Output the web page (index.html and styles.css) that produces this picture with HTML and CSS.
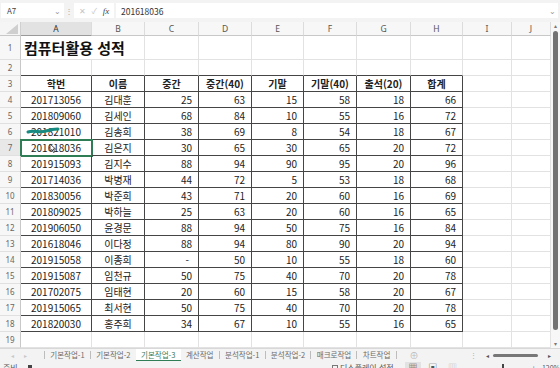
FILE: index.html
```html
<!DOCTYPE html>
<html lang="ko">
<head>
<meta charset="utf-8">
<link rel="stylesheet" href="styles.css">
</head>
<body>
<div class="fbar">
  <div class="namebox"><span>A7</span><span class="chev">⌄</span></div>
  <div class="fsep">⋮</div>
  <div class="fxbox"><span class="fxi">✕</span><span class="fxi">✓</span><span class="fx">fx</span></div>
  <div class="finput"><span>201618036</span><span class="chev">⌄</span></div>
</div>
<div class="main">
  <div class="grid">
    <div class="corner"><svg width="20" height="13" viewBox="0 0 20 13"><polygon points="18,2 18,12 6,12" fill="#cfcfcf"/></svg></div>
    <div class="ch sel">A</div><div class="ch">B</div><div class="ch">C</div><div class="ch">D</div><div class="ch">E</div><div class="ch">F</div><div class="ch">G</div><div class="ch">H</div><div class="ch">I</div><div class="ch">J</div>

    <div class="rh">1</div><div class="c title">컴퓨터활용 성적</div><div class="c"></div><div class="c"></div><div class="c"></div><div class="c"></div><div class="c"></div><div class="c"></div><div class="c"></div><div class="c"></div>

    <div class="rh">2</div><div class="c tt"></div><div class="c tt"></div><div class="c tt"></div><div class="c tt"></div><div class="c tt"></div><div class="c tt"></div><div class="c tt"></div><div class="c tt"></div><div class="c"></div><div class="c"></div>

    <div class="rh">3</div><div class="c t th">학번</div><div class="c t th">이름</div><div class="c t th">중간</div><div class="c t th">중간(40)</div><div class="c t th">기말</div><div class="c t th">기말(40)</div><div class="c t th">출석(20)</div><div class="c t th">합계</div><div class="c"></div><div class="c"></div>

    <div class="rh">4</div><div class="c t ctr">201713056</div><div class="c t ctr">김대훈</div><div class="c t num">25</div><div class="c t num">63</div><div class="c t num">15</div><div class="c t num">58</div><div class="c t num">18</div><div class="c t num">66</div><div class="c"></div><div class="c"></div>

    <div class="rh">5</div><div class="c t ctr">201809060</div><div class="c t ctr">김세인</div><div class="c t num">68</div><div class="c t num">84</div><div class="c t num">10</div><div class="c t num">55</div><div class="c t num">16</div><div class="c t num">72</div><div class="c"></div><div class="c"></div>

    <div class="rh">6</div><div class="c t ctr">201821010</div><div class="c t ctr">김송희</div><div class="c t num">38</div><div class="c t num">69</div><div class="c t num">8</div><div class="c t num">54</div><div class="c t num">18</div><div class="c t num">67</div><div class="c"></div><div class="c"></div>

    <div class="rh rsel">7</div><div class="c t ctr active">201618036</div><div class="c t ctr">김은지</div><div class="c t num">30</div><div class="c t num">65</div><div class="c t num">30</div><div class="c t num">65</div><div class="c t num">20</div><div class="c t num">72</div><div class="c"></div><div class="c"></div>

    <div class="rh">8</div><div class="c t ctr">201915093</div><div class="c t ctr">김지수</div><div class="c t num">88</div><div class="c t num">94</div><div class="c t num">90</div><div class="c t num">95</div><div class="c t num">20</div><div class="c t num">96</div><div class="c"></div><div class="c"></div>

    <div class="rh">9</div><div class="c t ctr">201714036</div><div class="c t ctr">박병재</div><div class="c t num">44</div><div class="c t num">72</div><div class="c t num">5</div><div class="c t num">53</div><div class="c t num">18</div><div class="c t num">68</div><div class="c"></div><div class="c"></div>

    <div class="rh">10</div><div class="c t ctr">201830056</div><div class="c t ctr">박준희</div><div class="c t num">43</div><div class="c t num">71</div><div class="c t num">20</div><div class="c t num">60</div><div class="c t num">16</div><div class="c t num">69</div><div class="c"></div><div class="c"></div>

    <div class="rh">11</div><div class="c t ctr">201809025</div><div class="c t ctr">박하늘</div><div class="c t num">25</div><div class="c t num">63</div><div class="c t num">20</div><div class="c t num">60</div><div class="c t num">16</div><div class="c t num">65</div><div class="c"></div><div class="c"></div>

    <div class="rh">12</div><div class="c t ctr">201906050</div><div class="c t ctr">윤경문</div><div class="c t num">88</div><div class="c t num">94</div><div class="c t num">50</div><div class="c t num">75</div><div class="c t num">16</div><div class="c t num">84</div><div class="c"></div><div class="c"></div>

    <div class="rh">13</div><div class="c t ctr">201618046</div><div class="c t ctr">이다정</div><div class="c t num">88</div><div class="c t num">94</div><div class="c t num">80</div><div class="c t num">90</div><div class="c t num">20</div><div class="c t num">94</div><div class="c"></div><div class="c"></div>

    <div class="rh">14</div><div class="c t ctr">201915058</div><div class="c t ctr">이종희</div><div class="c t num dash">-</div><div class="c t num">50</div><div class="c t num">10</div><div class="c t num">55</div><div class="c t num">18</div><div class="c t num">60</div><div class="c"></div><div class="c"></div>

    <div class="rh">15</div><div class="c t ctr">201915087</div><div class="c t ctr">임천규</div><div class="c t num">50</div><div class="c t num">75</div><div class="c t num">40</div><div class="c t num">70</div><div class="c t num">20</div><div class="c t num">78</div><div class="c"></div><div class="c"></div>

    <div class="rh">16</div><div class="c t ctr">201702075</div><div class="c t ctr">임태현</div><div class="c t num">20</div><div class="c t num">60</div><div class="c t num">15</div><div class="c t num">58</div><div class="c t num">20</div><div class="c t num">67</div><div class="c"></div><div class="c"></div>

    <div class="rh">17</div><div class="c t ctr">201915065</div><div class="c t ctr">최서현</div><div class="c t num">50</div><div class="c t num">75</div><div class="c t num">40</div><div class="c t num">70</div><div class="c t num">20</div><div class="c t num">78</div><div class="c"></div><div class="c"></div>

    <div class="rh">18</div><div class="c t ctr">201820030</div><div class="c t ctr">홍주희</div><div class="c t num">34</div><div class="c t num">67</div><div class="c t num">10</div><div class="c t num">55</div><div class="c t num">16</div><div class="c t num">65</div><div class="c"></div><div class="c"></div>

    <div class="rh">19</div><div class="c"></div><div class="c"></div><div class="c"></div><div class="c"></div><div class="c"></div><div class="c"></div><div class="c"></div><div class="c"></div><div class="c"></div><div class="c"></div>

    <svg class="pen" width="34" height="10" viewBox="0 0 34 10"><path d="M2 7 C 8 5, 14 8, 20 6 S 28 4, 32 4" stroke="#178a82" stroke-width="3" fill="none" stroke-linecap="round"/></svg>
    <svg class="cursor" width="7" height="10" viewBox="0 0 7 10"><path d="M1 1 L1 8 L3 6.5 L4.5 9.5 L5.8 8.8 L4.3 6 L6.5 6 Z" fill="#fff" stroke="#222" stroke-width="0.8"/></svg>
  </div>
  <div class="vscroll">
    <span class="va">▴</span>
    <div class="vthumb"></div>
    <span class="va">▾</span>
  </div>
</div>
<div class="tabs">
  <div class="navs"><span class="nav">◂</span><span class="nav">▸</span></div>
  <span class="tsep"></span>
  <span class="tab">기본작업-1</span><span class="tsep"></span>
  <span class="tab">기본작업-2</span>
  <span class="tab on">기본작업-3</span>
  <span class="tab">계산작업</span><span class="tsep"></span>
  <span class="tab">분석작업-1</span><span class="tsep"></span>
  <span class="tab">분석작업-2</span><span class="tsep"></span>
  <span class="tab">매크로작업</span><span class="tsep"></span>
  <span class="tab">차트작업</span><span class="tsep"></span>
  <span class="plus">⊕</span>
  <span class="hs">
    <span class="dots">⋮</span><span class="ha">◂</span><span class="hthumb"></span><span class="ha">▸</span>
  </span>
</div>
<div class="status">
  <span class="ready">준비</span><span class="sicon"></span>
  <span class="disp"><span class="box"></span>디스플레이 설정</span>
  <span class="view on">▦</span><span class="view">▣</span><span class="view light">▥</span>
  <span class="zm">−</span><span class="slider"><span class="knob"></span></span><span class="zm">+</span><span class="pct">120%</span>
</div>
</body>
</html>
```
FILE: styles.css
```css
html, body {
  margin: 0;
  padding: 0;
}
body {
  width: 560px;
  height: 368px;
  overflow: hidden;
  background: #f3f3f3;
  font-family: "Noto Sans CJK KR", "Noto Sans", sans-serif;
  color: #222;
}

/* formula bar */
.fbar {
  height: 22px;
  box-sizing: border-box;
  padding: 3px 2px 0 1px;
  display: flex;
  align-items: flex-start;
}
.namebox {
  width: 63px;
  height: 15px;
  background: #fff;
  box-sizing: border-box;
  display: flex;
  align-items: center;
  justify-content: space-between;
  padding: 0 3px 0 6px;
  font-size: 8px;
  color: #444;
}
.chev {
  font-size: 8px;
  color: #999;
  line-height: 8px;
}
.fsep {
  width: 10px;
  text-align: center;
  font-size: 8px;
  color: #aaa;
  line-height: 15px;
}
.fxbox {
  width: 40px;
  height: 15px;
  background: #fff;
  display: flex;
  align-items: center;
  justify-content: space-around;
  padding: 0 2px;
  box-sizing: border-box;
}
.fxi {
  font-size: 8px;
  color: #c4c4c4;
}
.fx {
  font-family: "Liberation Serif", serif;
  font-style: italic;
  font-size: 9px;
  color: #444;
}
.finput {
  flex: 1;
  height: 15px;
  margin-left: 2px;
  background: #fff;
  display: flex;
  align-items: center;
  justify-content: space-between;
  padding: 0 2px 0 5px;
  font-size: 8.5px;
  color: #333;
}

/* sheet */
.main {
  display: flex;
}
.grid {
  position: relative;
  display: grid;
  grid-template-columns: 21px 71px 53px 54px 53px 52px 53px 54px 52px 49px 39px;
  grid-template-rows: 14px 24px repeat(18, 16px);
  background: #fff;
}
.corner {
  background: #f5f5f5;
  border-right: 1px solid #d0d0d0;
  border-bottom: 1px solid #c8c8c8;
  box-sizing: border-box;
}
.corner svg {
  display: block;
}
.ch {
  background: #f7f7f7;
  border-right: 1px solid #dcdcdc;
  border-bottom: 1px solid #c8c8c8;
  box-sizing: border-box;
  font-family: "Noto Sans", sans-serif;
  font-size: 8.5px;
  line-height: 13px;
  color: #555;
  text-align: center;
}
.ch.sel {
  background: #e2e2e2;
  border-bottom: 1px solid #9a9a9a;
  color: #333;
}
.rh {
  background: #f7f7f7;
  border-right: 1px solid #c8c8c8;
  border-bottom: 1px solid #e0e0e0;
  box-sizing: border-box;
  font-family: "Noto Sans", sans-serif;
  font-size: 8px;
  color: #666;
  display: flex;
  align-items: center;
  justify-content: center;
}
.rh.rsel {
  background: #e8e8e8;
}
.c {
  border-right: 1px solid #e2e2e2;
  border-bottom: 1px solid #e2e2e2;
  box-sizing: border-box;
  font-size: 10px;
  line-height: 15px;
  padding: 0 6px 0 3px;
  white-space: nowrap;
  overflow: hidden;
  color: #222;
}
.title {
  grid-column: span 2;
  font-size: 15px;
  font-weight: 700;
  line-height: 23px;
  padding-left: 3px;
  color: #111;
}
.tt {
  border-bottom-color: #454545;
}
.t {
  border-right-color: #454545;
  border-bottom-color: #454545;
}
.th {
  font-weight: 700;
  text-align: center;
  padding: 0;
}
.ctr {
  text-align: center;
  padding: 0;
}
.num {
  text-align: right;
}
.num.dash {
  padding-right: 9px;
}
.active {
  outline: 2px solid #2e7d55;
  outline-offset: -1px;
}
.pen {
  position: absolute;
  left: 26px;
  top: 103px;
}
.cursor {
  position: absolute;
  left: 49px;
  top: 121px;
}

/* vertical scrollbar */
.vscroll {
  width: 9px;
  height: 326px;
  background: #f7f7f7;
  display: flex;
  flex-direction: column;
  align-items: center;
}
.va {
  font-size: 6px;
  line-height: 8px;
  color: #777;
}
.vthumb {
  width: 5px;
  flex: 1;
  margin: 1px 0 10px;
  border-radius: 3px;
  background: #737373;
}

/* sheet tabs */
.tabs {
  height: 13px;
  box-sizing: border-box;
  border-top: 1px solid #d8d8d8;
  display: flex;
  align-items: center;
  font-size: 7.5px;
  color: #6a6a6a;
  white-space: nowrap;
}
.navs {
  width: 44px;
  display: flex;
  padding-left: 6px;
  box-sizing: border-box;
}
.nav {
  font-size: 6px;
  color: #c8c8c8;
  width: 13px;
  text-align: center;
}
.tsep {
  width: 1px;
  height: 8px;
  background: #bdbdbd;
}
.tab {
  padding: 0 5.25px;
  line-height: 12px;
}
.tab.on {
  background: #fff;
  color: #3b7a57;
  border-bottom: 1px solid #2e7d55;
  line-height: 11px;
}
.plus {
  margin-left: 13px;
  font-size: 9px;
  color: #bbb;
}
.hs {
  margin-left: auto;
  display: flex;
  align-items: center;
  margin-right: 9px;
}
.dots {
  color: #aaa;
  font-size: 7px;
  margin-right: 9px;
}
.ha {
  font-size: 6px;
  color: #555;
}
.hthumb {
  width: 45px;
  height: 3px;
  border-radius: 2px;
  background: #777;
  margin: 0 10px 0 4px;
}

/* status bar */
.status {
  height: 14px;
  display: flex;
  align-items: flex-start;
  font-size: 8px;
  color: #555;
  white-space: nowrap;
  line-height: 12px;
  padding-top: 1px;
}
.ready {
  margin-left: 3px;
}
.sicon {
  width: 5px;
  height: 4px;
  margin: 3px 0 0 10px;
  background: #444;
}
.disp {
  margin-left: 300px;
  display: flex;
  align-items: flex-start;
}
.box {
  width: 6px;
  height: 6px;
  border: 1px solid #777;
  box-sizing: border-box;
  margin: 3px 2px 0 0;
}
.view {
  width: 20px;
  text-align: center;
  font-size: 9px;
  color: #555;
  margin-left: 3px;
}
.view.on {
  background: #e2e2e2;
  margin-left: 11px;
}
.view.light {
  color: #bbb;
}
.zm {
  margin-left: 6px;
  color: #777;
}
.slider {
  width: 55px;
  height: 1px;
  background: #999;
  margin: 6px 4px 0;
  position: relative;
}
.knob {
  position: absolute;
  left: 27px;
  top: -4px;
  width: 2px;
  height: 8px;
  background: #444;
}
.pct {
  margin-left: 6px;
  font-size: 7px;
}
```
